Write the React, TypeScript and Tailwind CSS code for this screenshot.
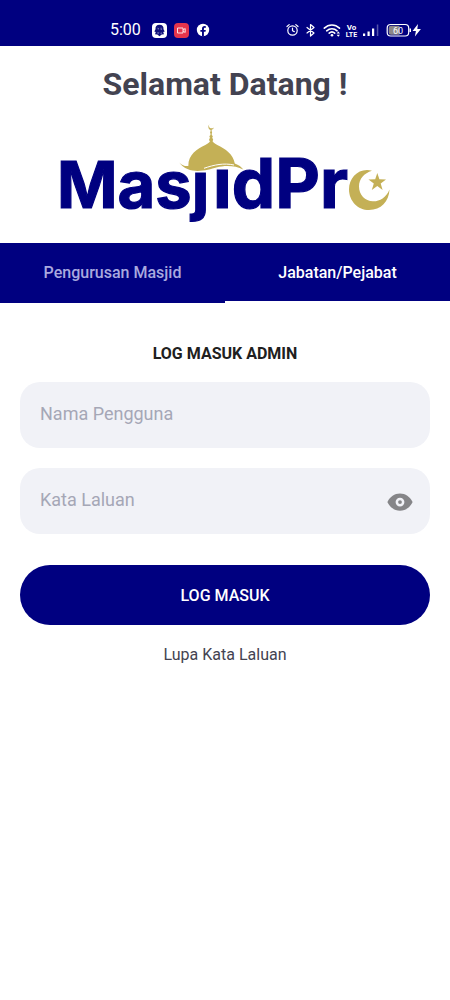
import React, { useState } from "react";

function StatusBar() {
  return (
    <div className="flex h-[46px] items-center bg-[#000080] pt-[14px] pr-7 pl-[110px] text-white">
      <span className="text-base leading-8">5:00</span>
      <div className="ml-[11px] flex items-center gap-[7px]">
        <svg className="size-[15px]" viewBox="0 0 15 15" aria-hidden="true">
          <rect width="15" height="15" rx="4" fill="#fff" />
          <path d="M7.500 1.800C4.600 1.800 3.300 3.500 3.500 6.200L2.300 8.500l1.500.6L3 11.200l2.300.3 2.200 1.700 2.200-1.700 2.300-.3-.8-2.100 1.500-.6-1.200-2.300C11.700 3.500 10.400 1.800 7.500 1.800z" fill="#10107c" />
          <path d="M5.500 4.500l1.500 1-1 1.500zM9 4l-.5 2.500 1.500.5zM5 9.500h2.500L6 11zM9 9l1 1.500-1.500.5z" fill="#8f8fc4" />
        </svg>
        <svg className="size-[15px]" viewBox="0 0 15 15" aria-hidden="true">
          <rect width="15" height="15" rx="4" fill="#e5344c" />
          <path d="M3.500 5h5.500v5H3.500zM9 7l2.200-1.500v4L9 8" fill="none" stroke="#fde0e4" strokeWidth="1" />
        </svg>
        <svg className="size-[14px]" viewBox="0 0 14 14" aria-hidden="true">
          <circle cx="7" cy="7" r="6.200" fill="#fff" />
          <path d="M6 13.500V8.800H4.400V7H6V5.700C6 4 7 3.100 8.500 3.100l1.400.1v1.600H9c-.8 0-1.100.4-1.100 1.100V7h1.900l-.3 1.800H7.900v4.700z" fill="#000080" />
        </svg>
      </div>
      <div className="ml-auto flex items-center">
        <svg className="h-[18px] w-[136px]" viewBox="286 21 136 18" role="img" aria-label="Status">
          <g fill="none" stroke="#fff" strokeWidth="1.200" strokeLinecap="round" strokeLinejoin="round">
            <circle cx="292.500" cy="30.500" r="4.700" />
            <path d="M292.500 28v2.800l1.800.8M287 26.500l2.200-1.900M298 26.500l-2.200-1.900" />
            <path d="M307 27.500l7 5.500-3.500 3v-11.500l3.500 3-7 5.500" />
            <path d="M324.300 28.200c4.500-4.200 10.700-4.200 15.200 0M326.700 30.800c3-2.800 7.500-2.800 10.400 0M329.200 33.200c1.600-1.500 3.900-1.500 5.500 0" strokeWidth="1.600" />
            <rect x="387.200" y="24.500" width="21.500" height="11.500" rx="3.500" />
          </g>
          <circle cx="332" cy="35.300" r="1.300" fill="#fff" />
          <path d="M336.600 33.500l1.700-2 1.700 2zM336.600 34.800l1.700 2 1.700-2z" fill="#fff" />
          <g fill="#fff" fontFamily="Roboto, sans-serif" fontWeight="700" textAnchor="middle">
            <text x="351.500" y="30" fontSize="8">Vo</text>
            <text x="351.500" y="37" fontSize="7">LTE</text>
          </g>
          <path d="M363 33.500h2.200V36H363zM367.500 31.500h2.200V36h-2.200zM372 28.500h2.200V36H372z" fill="#fff" />
          <path d="M376.800 24.500h1.500V36h-1.500z" fill="#5454ab" />
          <path d="M391 25.800h8.500v9H391a2.300 2.300 0 0 1-2.300-2.300v-4.400a2.300 2.300 0 0 1 2.300-2.300z" fill="#8b8588" />
          <text x="398" y="33.500" fontSize="9" fill="#fff" fontFamily="Roboto, sans-serif" textAnchor="middle">60</text>
          <path d="M409.500 28.500h1.500v3.500h-1.500z" fill="#fff" />
          <path d="M418 24l-5.500 7h3.400l-1 5.500 6-7.500h-3.600z" fill="#fff" />
        </svg>
      </div>
    </div>
  );
}

function Logo() {
  return (
    <svg className="mx-auto mt-[14px] h-[110px] w-[340px]" viewBox="55 118 340 110" role="img" aria-label="MasjidPro">
      <g fill="#000080" fontFamily="Inter, 'Liberation Sans', sans-serif" fontWeight="700" stroke="#000080" strokeWidth="1.200">
        <text x="57" y="208" fontSize="65">Masȷ</text>
        <text x="213" y="208" fontSize="69">ıdPr</text>
      </g>
      <path
        d="M179.300 162.500c3 3 6 4 9 3.500 0-12 9-17 17-21 3-1.600 5-3.300 6-5.500 1 2.200 3 3.900 6 5.500 8 4 16 9 17.500 18.500 4 1.300 6.500 3.500 8.500 6-8-4-18-4.500-27-2-9 2.700-28 8-37-5z"
        fill="#c4b056"
        stroke="#fff"
        strokeWidth="1.500"
        paintOrder="stroke"
      />
      <path d="M204 168.300c10-3.500 20-5.500 30-3.300" fill="none" stroke="#fff" strokeWidth="1" />
      <g fill="#c4b056">
        <path d="M210.600 129.500h1l.3 11h-1.600z" />
        <circle cx="211.100" cy="132.500" r="1" />
        <circle cx="211.100" cy="136.500" r="1.600" />
        <circle cx="211.100" cy="139.700" r="2" />
        <path d="M209.800 123.800c-2.300 2.700.6 6.200 4.200 3.700-1.300 3.700-5.600 2.900-5.600-.2 0-1.500.5-2.700 1.400-3.500z" />
        <path d="M372 170.700c-13-3.500-23 7-23 18.500 0 12 9 20.800 20 20.800 12 0 20-8.500 20.500-20.500-3.500 8.500-10 12-16.500 11.800-8-.3-14-6.500-14-14.800 0-7.500 5-13.500 13-15.800z" />
        <path d="M377.300 173l2.100 6.300 6.600.1-5.300 4 1.900 6.500-5.300-3.900-5.500 3.900 2-6.500-5.300-4 6.700-.1z" />
      </g>
    </svg>
  );
}

export default function App() {
  const [tab, setTab] = useState(1);
  const [visible, setVisible] = useState(false);
  const tabs = ["Pengurusan Masjid", "Jabatan/Pejabat"];

  return (
    <div className="min-h-screen bg-white font-[Roboto,sans-serif]">
      <StatusBar />
      <header>
        <h1 className="pt-[18px] text-center text-[32px] leading-10 font-bold text-[#434351]">Selamat Datang !</h1>
        <Logo />
      </header>
      <div role="tablist" className="mt-[15px] grid h-[60px] grid-cols-2 bg-[#000080]">
        {tabs.map((name, i) => (
          <button
            key={name}
            type="button"
            role="tab"
            aria-selected={tab === i}
            onClick={() => setTab(i)}
            className={
              tab === i
                ? "border-b-2 border-white pt-0.5 text-base font-medium text-white"
                : "border-b-2 border-transparent pt-0.5 text-base font-medium text-[#a9a9df]"
            }
          >
            {name}
          </button>
        ))}
      </div>
      <form className="px-5 pt-[39px]" onSubmit={(e) => e.preventDefault()}>
        <h2 className="text-center text-base leading-6 font-bold text-[#202020]">LOG MASUK ADMIN</h2>
        <input
          type="text"
          aria-label="Nama Pengguna"
          placeholder="Nama Pengguna"
          className="mt-4 block h-[66px] w-full rounded-[20px] bg-[#f1f2f7] px-5 pb-1 text-lg text-[#434351] outline-none placeholder:text-[#a5a7b6]"
        />
        <div className="mt-5 flex h-[66px] items-center rounded-[20px] bg-[#f1f2f7] pr-4 pl-5">
          <input
            type={visible ? "text" : "password"}
            aria-label="Kata Laluan"
            placeholder="Kata Laluan"
            className="h-full min-w-0 flex-1 bg-transparent pb-1 text-lg text-[#434351] outline-none placeholder:text-[#a5a7b6]"
          />
          <button type="button" aria-label="Tunjuk kata laluan" className="pt-0.5" onClick={() => setVisible(!visible)}>
            <svg className="size-7" viewBox="0 0 28 28" aria-hidden="true">
              <path
                fillRule="evenodd"
                fill="#858588"
                d="M14 5.500c5.500 0 10 3.300 12.300 7.900.3.500.3.900 0 1.400C24 19.300 19.500 22.700 14 22.700S4 19.300 1.700 14.800c-.3-.5-.3-.9 0-1.400C4 8.800 8.500 5.500 14 5.500zm0 4.200a4.400 4.400 0 1 0 0 8.800 4.400 4.400 0 0 0 0-8.800zm0 2.500a1.900 1.900 0 1 1 0 3.800 1.900 1.900 0 0 1 0-3.800z"
              />
            </svg>
          </button>
        </div>
        <button type="submit" className="mt-[31px] block h-[60px] w-full rounded-full bg-[#000080] pt-0.5 text-base font-medium text-white">
          LOG MASUK
        </button>
        <a href="#lupa" className="mx-auto mt-[18px] block w-fit text-base leading-6 text-[#434351]">
          Lupa Kata Laluan
        </a>
      </form>
    </div>
  );
}
